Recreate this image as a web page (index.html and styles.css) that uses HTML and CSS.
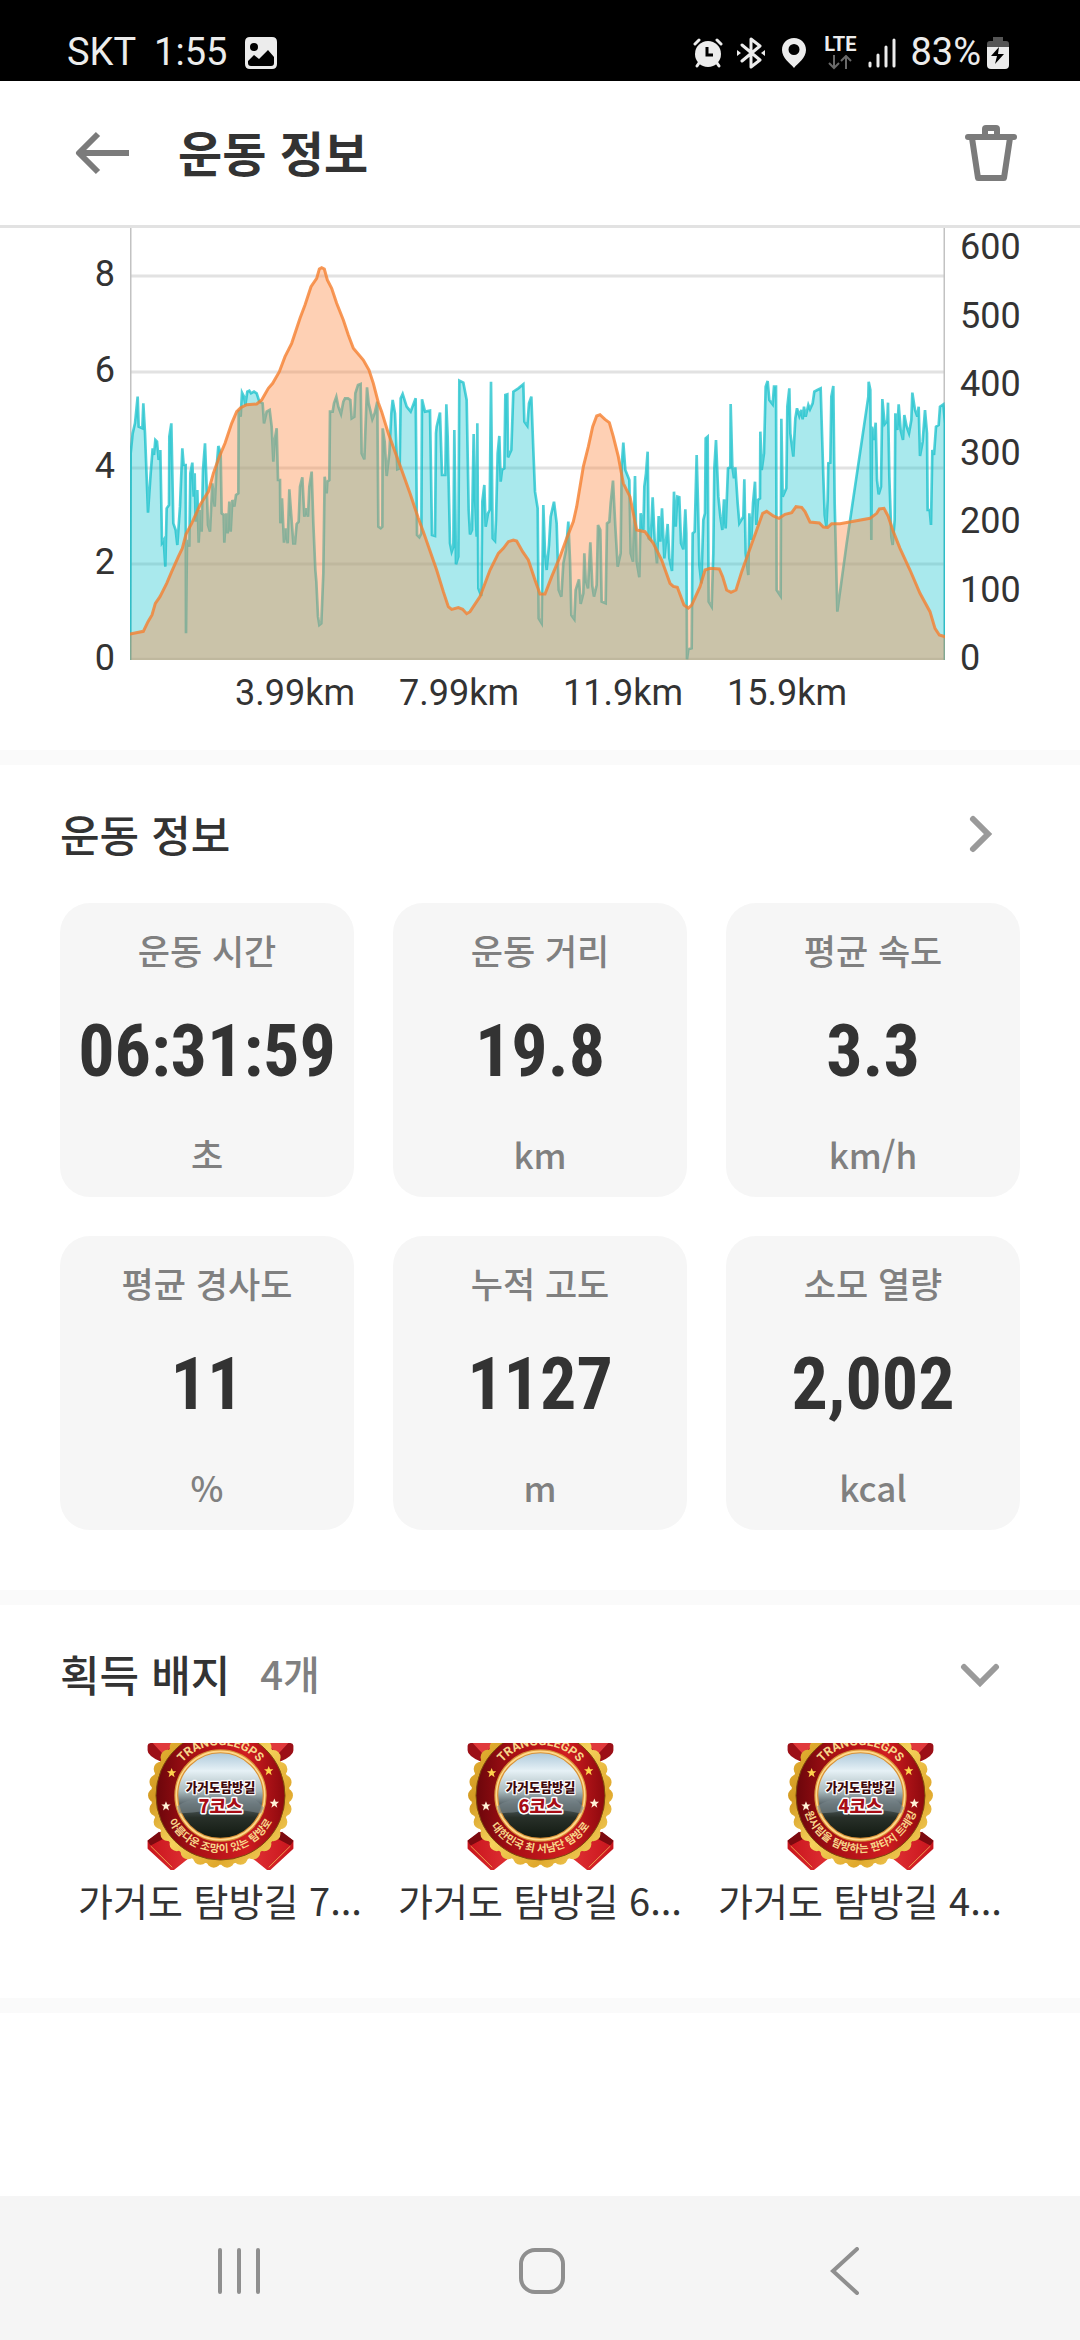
FILE: index.html
```html
<!DOCTYPE html>
<html lang="ko">
<head>
<meta charset="utf-8">
<meta name="viewport" content="width=device-width, initial-scale=1">
<title>운동 정보</title>
<link rel="stylesheet" href="styles.css">
</head>
<body>
<div class="statusbar">
  <div class="status-group">
    <span>SKT</span>
    <span>1:55</span>
    <svg class="status-photo" viewBox="0 0 32 32" width="32" height="32" aria-hidden="true"><path fill="#ececec" fill-rule="evenodd" d="M5 0H27Q32 0 32 5V27Q32 32 27 32H5Q0 32 0 27V5Q0 0 5 0ZM3 26Q3 29 6 29H26Q29 29 29 26V20L23 13L14 22L9 18L3 24ZM9 6A4 4 0 1 0 9 14A4 4 0 1 0 9 6Z"/></svg>
  </div>
  <div class="status-group status-right">
    <svg viewBox="0 0 30 30" width="30" height="30" aria-hidden="true"><circle cx="15" cy="16" r="13" fill="#ececec"/><path d="M2 6L6 2M24 2L28 6M6 25L4 28M24 25L26 28" stroke="#ececec" stroke-width="3" stroke-linecap="round"/><path d="M14 9V17H20" fill="none" stroke="#000" stroke-width="3"/></svg>
    <svg class="status-bt" viewBox="0 0 28 32" width="28" height="32" aria-hidden="true"><path d="M5 8L23 23L14 30V2L23 9L5 24" fill="none" stroke="#ececec" stroke-width="3" stroke-linejoin="round" stroke-linecap="round"/><path d="M0 13L4 16L0 19ZM28 13L24 16L28 19Z" fill="#ececec"/></svg>
    <svg class="status-pin" viewBox="0 0 24 30" width="24" height="30" aria-hidden="true"><path fill="#ececec" fill-rule="evenodd" d="M12 0C5 0 0 5 0 12C0 20 8 25 12 30C16 25 24 20 24 12C24 5 19 0 12 0ZM12 6A5 5 0 1 0 12 17A5 5 0 1 0 12 6Z"/></svg>
    <div class="lte">
      <span>LTE</span>
      <svg viewBox="0 0 24 15" width="24" height="15" aria-hidden="true"><path d="M6 0V13M1 8L6 13L11 8M18 14V1M13 6L18 1L23 6" fill="none" stroke="#6a6a6a" stroke-width="2"/></svg>
    </div>
    <svg class="status-signal" viewBox="0 0 28 30" width="28" height="30" aria-hidden="true"><path d="M2 25V28M10 17V28M18 9V28M26 2V28" stroke="#ececec" stroke-width="3" stroke-linecap="round"/></svg>
    <span class="battery-text">83%</span>
    <svg viewBox="0 0 22 32" width="22" height="32" aria-hidden="true"><path d="M6 0H16V4H19Q22 4 22 7V11H0V7Q0 4 3 4H6Z" fill="#555"/><path d="M0 10H22V28Q22 32 18 32H4Q0 32 0 28Z" fill="#ececec"/><path d="M12 10L4 19H10L8 27L17 17H11Z" fill="#000"/></svg>
  </div>
</div>

<header class="appbar">
  <button class="icon-btn" type="button" aria-label="뒤로">
    <svg viewBox="0 0 54 44" width="54" height="44"><path d="M23 3L4 22L23 41M4 22H54" fill="none" stroke="#7b7b7b" stroke-width="6" stroke-linejoin="round"/></svg>
  </button>
  <h1>운동 정보</h1>
  <button class="icon-btn" type="button" aria-label="삭제">
    <svg viewBox="0 0 52 56" width="52" height="56"><path d="M17 10V4Q17 0 21 0H31Q35 0 35 4V10H29V6H23V10Z" fill="#7b7b7b"/><path d="M3 12H49" stroke="#7b7b7b" stroke-width="6" stroke-linecap="round"/><path d="M7 13L13 53H39L45 13" fill="none" stroke="#7b7b7b" stroke-width="6" stroke-linejoin="round"/></svg>
  </button>
</header>

<main>
  <section class="chart" aria-label="속도 및 고도">
    <div class="axis axis-left"><span>8</span><span>6</span><span>4</span><span>2</span><span>0</span></div>
    <svg class="plot" viewBox="150 24 2445 1296" preserveAspectRatio="none" aria-hidden="true">
      <defs>
        <clipPath id="plot-area"><path d="M150 24H2595V1320H150Z"/></clipPath>
      </defs>
      <path class="grid" d="M150 168H2595M150 456H2595M150 744H2595M150 1032H2595M150 1318H2595"/>
      <path class="axis-line" d="M152 24V1320M2593 24V1320"/>
      <g clip-path="url(#plot-area)">
        <path class="speed" d="M150 1330L152 700L158 640L165 610L173 530L176 620L187 625L190 550L195 640L204 878L212 760L218 685L222 705L226 660L231 665L236 720L241 690L246 968L251 960L256 1040L260 865L267 855L268 650L274 610L280 910L287 930L292 975L300 860L307 685L311 735L317 735L318 1240L321 960L328 980L331 760L337 728L341 830L344 760L347 905L352 810L356 968L361 870L365 935L369 750L375 670L380 800L384 915L390 935L397 790L404 860L410 740L415 678L422 700L425 880L431 885L433 968L438 880L443 940L448 845L452 935L457 840L463 860L468 825L475 820L476 570L482 590L486 518L492 530L496 555L502 515L508 512L513 520L522 515L530 520L538 545L548 550L552 610L560 575L569 570L575 620L580 725L584 660L590 625L594 780L600 780L601 910L606 835L612 968L617 925L623 970L628 808L634 890L640 970L645 970L650 912L656 905L660 800L667 772L673 890L678 865L684 890L688 800L695 755L700 910L706 1050L709 1085L714 1190L718 1215L724 1210L730 1060L734 770L740 820L742 785L748 780L750 575L758 575L762 550L769 530L775 560L783 582L790 545L795 535L804 535L811 540L815 595L823 590L826 520L834 495L842 492L845 700L853 718L861 502L866 550L877 598L884 580L892 545L895 920L902 925L907 920L908 625L914 665L920 768L928 700L934 580L938 540L945 580L952 748L959 745L962 535L968 522L980 560L992 575L1007 535L1011 945L1018 952L1024 940L1026 538L1035 575L1050 572L1056 945L1065 948L1068 640L1070 620L1080 578L1086 765L1096 765L1099 553L1103 650L1110 970L1115 995L1120 980L1123 630L1128 1033L1135 1010L1138 482L1150 488L1160 540L1166 870L1170 943L1176 930L1181 642L1185 830L1190 950L1192 610L1195 1105L1204 1128L1207 845L1213 795L1217 920L1224 880L1229 870L1233 485L1238 955L1245 963L1248 900L1253 700L1258 648L1262 785L1266 750L1273 745L1276 525L1282 523L1284 712L1294 690L1300 515L1315 505L1330 493L1333 605L1342 618L1347 550L1354 530L1360 690L1365 815L1373 865L1376 1195L1385 1210L1390 855L1395 1000L1400 1050L1407 975L1412 890L1422 845L1430 910L1436 1110L1444 1130L1450 1030L1458 990L1465 905L1470 1020L1474 1185L1483 1198L1487 1110L1497 1078L1502 1152L1510 1120L1513 1000L1517 1080L1524 1105L1531 967L1537 1098L1542 1130L1550 1095L1554 915L1561 930L1565 1145L1577 1150L1581 910L1588 905L1592 850L1599 782L1606 920L1613 1040L1622 1000L1625 740L1630 668L1636 750L1648 780L1652 1000L1659 1025L1665 768L1670 1025L1678 1072L1682 880L1690 930L1693 800L1698 760L1703 695L1706 955L1712 960L1718 832L1724 960L1731 1030L1736 888L1741 965L1746 865L1753 1015L1763 912L1768 1015L1776 1053L1782 815L1787 920L1792 830L1798 832L1803 970L1810 988L1816 868L1819 940L1821 1318L1825 1288L1835 1285L1837 1045L1838 940L1844 935L1850 705L1854 850L1858 1035L1864 1090L1870 900L1875 880L1877 655L1883 650L1886 1145L1895 1160L1900 1000L1903 745L1908 660L1915 830L1921 890L1927 930L1932 838L1937 925L1944 745L1951 742L1952 552L1957 740L1962 775L1966 742L1973 850L1978 910L1990 890L1993 778L1997 1000L2005 1065L2008 880L2014 960L2019 850L2025 785L2029 915L2034 840L2040 835L2041 635L2045 750L2052 700L2057 500L2063 483L2068 540L2078 553L2082 500L2088 500L2090 1110L2102 1128L2104 596L2108 830L2119 805L2122 560L2128 505L2131 640L2140 710L2146 595L2151 565L2158 588L2164 570L2168 598L2172 560L2177 590L2185 555L2190 568L2198 550L2203 515L2212 510L2222 505L2226 640L2230 770L2234 885L2239 920L2243 840L2245 730L2251 728L2254 530L2260 498L2264 850L2272 1175L2300 970L2365 530L2366 485L2371 510L2374 960L2376 620L2382 660L2387 608L2391 780L2396 823L2403 800L2407 537L2414 612L2422 602L2424 548L2428 770L2434 950L2438 975L2444 900L2446 580L2452 630L2456 553L2462 630L2469 660L2473 585L2480 620L2487 640L2494 600L2497 518L2505 570L2512 590L2516 560L2520 708L2528 665L2535 570L2541 640L2543 870L2549 870L2553 915L2557 690L2562 705L2568 620L2576 615L2580 560L2590 553L2595 610V1330Z"/>
        <path class="elevation" d="M130 1340V1244L150 1242L190 1234L204 1205L216 1185L226 1150L240 1130L260 1090L275 1055L295 1010L307 985L318 942L335 910L360 855L385 815L400 760L418 710L435 670L455 610L470 575L482 563L500 554L530 552L545 540L565 505L578 490L598 455L615 410L635 370L660 295L675 255L693 200L710 175L718 147L725 143L733 147L742 180L755 205L770 250L790 300L805 345L820 385L850 420L867 450L880 490L895 548L905 575L925 640L965 750L990 820L1015 895L1030 935L1070 1050L1090 1115L1105 1160L1115 1168L1135 1163L1148 1168L1160 1181L1170 1175L1200 1130L1230 1050L1255 1000L1270 985L1285 965L1300 960L1310 963L1328 995L1345 1020L1365 1080L1380 1122L1395 1122L1415 1070L1440 1010L1460 955L1480 905L1490 860L1510 740L1525 680L1538 620L1550 588L1560 584L1575 598L1588 608L1600 650L1615 710L1630 790L1650 830L1670 930L1695 935L1720 970L1745 1020L1770 1090L1780 1099L1792 1102L1812 1155L1825 1164L1835 1155L1860 1100L1875 1050L1890 1045L1918 1047L1928 1070L1940 1110L1953 1117L1968 1110L1985 1055L2005 1000L2030 930L2048 880L2060 874L2080 888L2097 895L2115 883L2135 878L2148 860L2165 862L2175 875L2190 906L2218 909L2230 921L2243 922L2255 911L2280 911L2370 895L2390 880L2398 867L2412 865L2425 890L2440 935L2460 985L2490 1050L2520 1120L2550 1175L2565 1225L2578 1245L2595 1250H2615V1340Z"/>
      </g>
    </svg>
    <div class="axis axis-right"><span>600</span><span>500</span><span>400</span><span>300</span><span>200</span><span>100</span><span>0</span></div>
    <div class="axis-bottom"><span>3.99km</span><span>7.99km</span><span>11.9km</span><span>15.9km</span></div>
  </section>

  <section class="panel info">
    <div class="panel-head">
      <h2>운동 정보</h2>
      <button class="icon-btn more" type="button" aria-label="더 보기">
        <svg viewBox="0 0 40 40" width="40" height="40"><path d="M13 5L28 20L13 35" fill="none" stroke="#9a9a9a" stroke-width="6" stroke-linecap="round"/></svg>
      </button>
    </div>
    <div class="cards">
      <article class="card"><h3>운동 시간</h3><strong>06:31:59</strong><span>초</span></article>
      <article class="card"><h3>운동 거리</h3><strong>19.8</strong><span>km</span></article>
      <article class="card"><h3>평균 속도</h3><strong>3.3</strong><span>km/h</span></article>
      <article class="card"><h3>평균 경사도</h3><strong>11</strong><span>%</span></article>
      <article class="card"><h3>누적 고도</h3><strong>1127</strong><span>m</span></article>
      <article class="card"><h3>소모 열량</h3><strong>2,002</strong><span>kcal</span></article>
    </div>
  </section>

  <section class="panel badges">
    <div class="panel-head">
      <h2>획득 배지</h2>
      <span class="count">4개</span>
      <button class="icon-btn more" type="button" aria-label="펼치기">
        <svg viewBox="0 0 40 40" width="40" height="40"><path d="M4 13L20 29L36 13" fill="none" stroke="#9a9a9a" stroke-width="6" stroke-linecap="round"/></svg>
      </button>
    </div>
    <svg width="0" height="0" class="defs" aria-hidden="true">
      <defs>
        <linearGradient id="gold" x1="0" y1="0" x2="1" y2="1"><stop offset="0" stop-color="#e9b93a"/><stop offset=".25" stop-color="#d39a22"/><stop offset=".5" stop-color="#f6d25c"/><stop offset=".75" stop-color="#e0a82c"/><stop offset="1" stop-color="#f8dc6c"/></linearGradient>
        <linearGradient id="red" x1="0" y1="0" x2="1" y2="0"><stop offset="0" stop-color="#6b060b"/><stop offset=".3" stop-color="#a80f15"/><stop offset=".7" stop-color="#d01c20"/><stop offset="1" stop-color="#8c090e"/></linearGradient>
        <linearGradient id="ribbon" x1="0" y1="0" x2="1" y2="0"><stop offset="0" stop-color="#c8141c"/><stop offset=".5" stop-color="#f04444"/><stop offset="1" stop-color="#c8141c"/></linearGradient>
        <linearGradient id="scene" x1="0" y1="0" x2="0" y2="1"><stop offset="0" stop-color="#a9c6d8"/><stop offset=".22" stop-color="#e6f1f6"/><stop offset=".45" stop-color="#a9babd"/><stop offset=".6" stop-color="#59656a"/><stop offset=".75" stop-color="#283029"/><stop offset="1" stop-color="#10180f"/></linearGradient>
        <path id="arc-top" d="M118 226A152 152 0 0 1 422 226"/>
        <path id="arc-bottom" d="M93 220A177 177 0 0 0 447 220"/>
        <path id="star" d="M0 -15L4 -5L14 -5L6 2L9 13L0 6L-9 13L-6 2L-14 -5L-4 -5Z"/>
        <symbol id="medal" viewBox="50 68 440 382">
          <path d="M50 76Q52 68 60 68H140L90 124Q52 108 50 90ZM490 76Q488 68 480 68H400L450 124Q488 108 490 90Z" fill="#9c0f17"/>
          <path d="M66 68H140L96 100ZM474 68H400L444 100Z" fill="#e03a3c"/>
          <path d="M50 362L90 335L180 410L130 450H120L50 385ZM490 362L450 335L360 410L410 450H420L490 385Z" fill="url(#ribbon)"/>
          <path d="M50 362L85 335L110 350L60 376ZM490 362L455 335L430 350L480 376Z" fill="#7c0a10"/>
          <path d="M60 378L125 442M480 378L415 442" stroke="#f0a050" stroke-width="3"/>
          <circle cx="270" cy="226" r="208" fill="url(#gold)"/>
          <circle cx="270" cy="226" r="196" fill="none" stroke="url(#gold)" stroke-width="44" stroke-dasharray="0 41" stroke-linecap="round"/>
          <circle cx="270" cy="226" r="194" fill="url(#red)" stroke="#7a4a0c" stroke-width="3"/>
          <circle cx="270" cy="226" r="133" fill="url(#scene)" stroke="#d89238" stroke-width="12"/>
          <circle cx="270" cy="226" r="133" fill="none" stroke="#ffd88a" stroke-width="5"/>
          <path d="M140 258Q190 225 230 245T310 235T400 262L392 280Q300 262 240 270T145 280Z" fill="#78868a" opacity=".6"/>
          <text class="medal-ring medal-brand"><textPath href="#arc-top" startOffset="50%">TRANGGLEGPS</textPath></text>
          <use href="#star" x="123" y="158" fill="#ffd24d"/><use href="#star" x="415" y="152" fill="#ffd24d"/>
          <use href="#star" x="106" y="258" fill="#fff0d8"/><use href="#star" x="432" y="250" fill="#fff0d8"/>
          <text class="medal-name" x="270" y="216">가거도탐방길</text>
        </symbol>
      </defs>
    </svg>
    <ul class="badge-list">
      <li>
        <svg class="medal" viewBox="50 68 440 382" role="img" aria-label="7코스 배지"><use href="#medal" x="50" y="68" width="440" height="382"/><text class="medal-course" x="270" y="280">7코스</text><text class="medal-ring"><textPath href="#arc-bottom" startOffset="50%">아름다운 조망이 있는 탐방로</textPath></text></svg>
        <span>가거도 탐방길 7...</span>
      </li>
      <li>
        <svg class="medal" viewBox="50 68 440 382" role="img" aria-label="6코스 배지"><use href="#medal" x="50" y="68" width="440" height="382"/><text class="medal-course" x="270" y="280">6코스</text><text class="medal-ring"><textPath href="#arc-bottom" startOffset="50%">대한민국 최 서남단 탐방로</textPath></text></svg>
        <span>가거도 탐방길 6...</span>
      </li>
      <li>
        <svg class="medal" viewBox="50 68 440 382" role="img" aria-label="4코스 배지"><use href="#medal" x="50" y="68" width="440" height="382"/><text class="medal-course" x="270" y="280">4코스</text><text class="medal-ring"><textPath href="#arc-bottom" startOffset="50%">원시림을 탐방하는 판타지 트레킹</textPath></text></svg>
        <span>가거도 탐방길 4...</span>
      </li>
    </ul>
  </section>
</main>

<nav class="navbar">
  <button class="icon-btn" type="button" aria-label="최근 앱"><svg viewBox="0 0 48 48" width="48" height="48"><path d="M5 3V45M24 3V45M43 3V45" stroke="#8f8f8f" stroke-width="4" stroke-linecap="round"/></svg></button>
  <button class="icon-btn" type="button" aria-label="홈"><svg viewBox="0 0 48 48" width="48" height="48"><rect x="3" y="3" width="42" height="42" rx="14" fill="none" stroke="#8f8f8f" stroke-width="4"/></svg></button>
  <button class="icon-btn" type="button" aria-label="이전"><svg viewBox="0 0 48 48" width="48" height="48"><path d="M36 2L12 24L36 46" fill="none" stroke="#8f8f8f" stroke-width="4" stroke-linecap="round"/></svg></button>
</nav>
</body>
</html>
```

FILE: styles.css
```css
* {
  box-sizing: border-box;
}

body {
  margin: 0;
  min-height: 100vh;
  display: flex;
  flex-direction: column;
  background: #fff;
  color: #333;
  font-family: "Noto Sans CJK KR", sans-serif;
}

h1, h2, h3, ul {
  margin: 0;
  padding: 0;
}

.icon-btn {
  display: flex;
  align-items: center;
  justify-content: center;
  padding: 0;
  border: 0;
  background: none;
}

/* Status bar */
.statusbar {
  display: flex;
  justify-content: space-between;
  height: 81px;
  padding: 24px 71px 0 67px;
  background: #000;
  color: #ececec;
  font-family: Roboto, sans-serif;
  font-size: 38px;
  line-height: 57px;
}

.status-group {
  display: flex;
  align-items: center;
  gap: 18px;
}

.status-right {
  gap: 0;
}

.status-bt {
  margin-left: 14px;
}

.status-pin {
  margin-left: 17px;
}

.lte {
  display: flex;
  flex-direction: column;
  align-items: center;
  gap: 2px;
  margin-left: 18px;
  font-size: 20px;
  font-weight: 700;
  line-height: 18px;
}

.status-signal {
  margin-left: 12px;
}

.battery-text {
  margin: 0 6px 0 14px;
}

/* App bar */
.appbar {
  display: flex;
  align-items: center;
  height: 147px;
  padding: 0 63px 0 75px;
  border-bottom: 3px solid #e2e2e2;
}

.appbar h1 {
  flex: 1;
  padding: 0 0 4px 49px;
  font-size: 48px;
  font-weight: 700;
  line-height: 60px;
}

/* Chart */
.chart {
  display: grid;
  grid-template-columns: 130px 1fr 135px;
  grid-template-rows: 432px 90px;
  font-family: Roboto, sans-serif;
  font-size: 36px;
  line-height: 36px;
}

.plot {
  width: 100%;
  height: 100%;
}

.axis {
  display: flex;
  flex-direction: column;
  justify-content: space-between;
  height: 448px;
}

.axis-left {
  align-items: flex-end;
  padding: 28px 15px 0 0;
}

.axis-right {
  padding: 1px 0 0 15px;
}

.axis-bottom {
  grid-column: 2;
  display: grid;
  grid-template-columns: repeat(4, 1fr);
  margin: 15px 76px 0 83px;
  text-align: center;
}

.grid {
  fill: none;
  stroke: #e2e2e2;
  stroke-width: 9;
}

.axis-line {
  fill: none;
  stroke: #c2c2c2;
  stroke-width: 5;
}

.speed {
  fill: #28c8d2;
  fill-opacity: .4;
  stroke: #08bcc8;
  stroke-opacity: .7;
  stroke-width: 8;
}

.elevation {
  fill: #fc8943;
  fill-opacity: .4;
  stroke: #f5802f;
  stroke-opacity: .8;
  stroke-width: 9;
}

/* Panels */
.panel {
  padding: 0 60px;
  border-top: 15px solid #fafafa;
}

.panel-head {
  display: flex;
  align-items: center;
  height: 138px;
}

.panel-head h2 {
  padding-bottom: 3px;
  font-size: 43px;
  font-weight: 500;
  line-height: 60px;
}

.count {
  padding: 0 0 3px 30px;
  color: #808080;
  font-size: 40px;
  font-weight: 500;
}

.more {
  margin: 0 20px 0 auto;
}

.info {
  padding-bottom: 60px;
}

.cards {
  display: grid;
  grid-template-columns: repeat(3, 1fr);
  gap: 39px;
}

.card {
  display: flex;
  flex-direction: column;
  align-items: center;
  height: 294px;
  padding-top: 25px;
  border-radius: 30px;
  background: #f6f6f6;
  color: #808080;
}

.card h3 {
  font-size: 35px;
  font-weight: 500;
  line-height: 44px;
}

.card strong {
  padding: 30px 0;
  color: #333;
  font-family: "Roboto Condensed", "Noto Sans CJK KR", sans-serif;
  font-size: 72px;
  font-weight: 700;
  line-height: 100px;
}

.card span {
  font-size: 35px;
  font-weight: 500;
  line-height: 44px;
}

/* Badges */
.badges {
  padding-bottom: 64px;
}

.defs {
  position: absolute;
}

.badge-list {
  display: grid;
  grid-template-columns: repeat(3, 1fr);
  list-style: none;
}

.badge-list li {
  display: flex;
  flex-direction: column;
  align-items: center;
  gap: 2px;
  font-size: 38px;
  line-height: 56px;
  white-space: nowrap;
}

.medal {
  width: 147px;
  height: 127px;
}

.medal-name,
.medal-course {
  font-weight: 900;
  paint-order: stroke;
  stroke: #fff;
  stroke-linejoin: round;
  text-anchor: middle;
}

.medal-name {
  fill: #3c080b;
  font-size: 38px;
  stroke-width: 7px;
}

.medal-course {
  fill: #a80c16;
  font-size: 54px;
  stroke-width: 9px;
}

.medal-ring {
  fill: #f8d68a;
  font-size: 32px;
  font-weight: 700;
  text-anchor: middle;
}

.medal-brand {
  font-family: Roboto, sans-serif;
  font-size: 37px;
}

/* Band that closes the last panel */
main::after {
  content: "";
  display: block;
  height: 15px;
  background: #fafafa;
}

.badge-list {
  padding-bottom: 6px;
}

/* System navigation */
.navbar {
  display: grid;
  grid-template-columns: repeat(3, 1fr);
  align-items: center;
  height: 144px;
  margin-top: auto;
  padding: 6px 84px 0 88px;
  background: #f5f5f5;
}
```
